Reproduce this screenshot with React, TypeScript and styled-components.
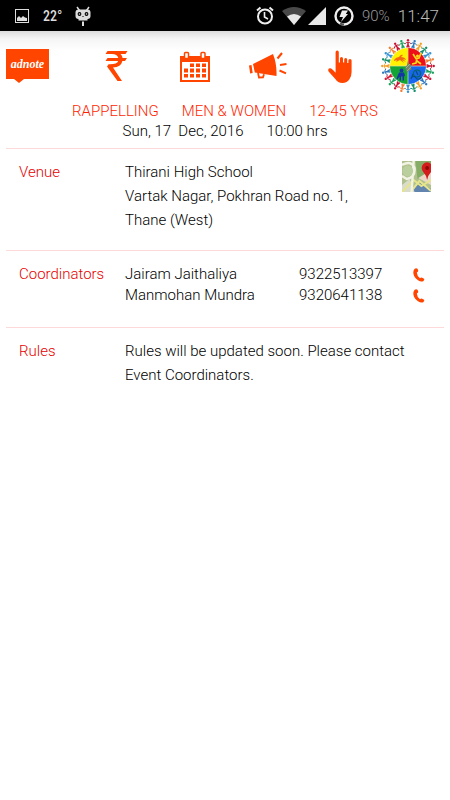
import React from "react";
import styled, { createGlobalStyle } from "styled-components";

const ORANGE = "#ff4500";

const GlobalStyle = createGlobalStyle`
  *, *::before, *::after { box-sizing: border-box; }
  body {
    margin: 0;
    background: #fff;
    color: #000;
    font-family: Roboto, "Open Sans", sans-serif;
    font-size: 15px;
    font-weight: 300;
  }
`;

const Page = styled.div`
  min-height: 100vh;
`;

const StatusBar = styled.div`
  display: flex;
  align-items: center;
  justify-content: space-between;
  height: 31px;
  padding: 0 11px 0 14px;
  background: #000;
  color: #ddd;
`;

const StatusLeft = styled.div`
  display: flex;
  align-items: center;
  gap: 13px;
`;

const StatusRight = styled.div`
  display: flex;
  align-items: center;
  gap: 8px;
`;

const Reception = styled.div`
  display: flex;
  gap: 2px;
`;

const Temperature = styled.span`
  font-family: "Liberation Sans Narrow", "Roboto Condensed", Roboto, sans-serif;
  font-size: 14px;
  font-weight: 500;
`;

const Battery = styled.span`
  font-size: 15px;
  color: #999;
`;

const Clock = styled.span`
  font-size: 17px;
  color: #bbb;
`;

const Toolbar = styled.nav`
  display: grid;
  grid-template-columns: 68fr 96fr 62fr 84fr 60fr 76fr;
  align-items: center;
  height: 70px;
  padding-right: 4px;
  background: linear-gradient(#dcdcdc, #f5f5f5 8px, #fff 20px);
`;

const ToolButton = styled.button<{ $align?: string }>`
  display: flex;
  align-items: center;
  justify-content: ${(p) => p.$align ?? "center"};
  height: 60px;
  padding: 0 6px;
  border: 0;
  background: none;
  cursor: pointer;
`;

const NoteBadge = styled.span`
  position: relative;
  display: flex;
  align-items: center;
  justify-content: center;
  width: 43px;
  height: 30px;
  margin-bottom: 4px;
  background: ${ORANGE};
  color: #fff;
  font-family: "Liberation Serif", serif;
  font-size: 12px;
  font-style: italic;
  font-weight: 700;

  &::after {
    content: "";
    position: absolute;
    top: 100%;
    left: 8px;
    border: 5px solid transparent;
    border-top: 4px solid ${ORANGE};
    border-bottom: 0;
  }
`;

const EventHeader = styled.header`
  display: flex;
  flex-direction: column;
  align-items: center;
  padding-bottom: 7px;
`;

const EventLine = styled.div<{ $accent?: boolean }>`
  display: flex;
  gap: 23px;
  line-height: 20px;
  white-space: pre;
  color: ${(p) => (p.$accent ? "#ff1e00" : "#000")};
`;

const Section = styled.section`
  display: grid;
  grid-template-columns: 106px 1fr;
  margin: 0 6px;
  padding: 11px 13px 18px;
  border-top: 1px solid #fdd9d9;
`;

const SectionLabel = styled.h2`
  margin: 0;
  color: #e60000;
  font-size: 15px;
  font-weight: 300;
  line-height: 24px;
`;

const VenueBody = styled.div`
  display: flex;
  align-items: flex-start;
  justify-content: space-between;
`;

const Text = styled.p`
  margin: 0;
  line-height: 24px;
`;

const MapLink = styled.a`
  display: block;
  height: 30px;
  margin-top: 1px;
`;

const ContactTable = styled.table`
  width: 100%;
  margin: 2px 0 3px;
  border-collapse: collapse;
  line-height: 21px;

  td { padding: 0; }
`;

const NumberCell = styled.td`
  width: 108px;
`;

const CallCell = styled.td`
  width: 24px;
`;

const CallLink = styled.a`
  display: flex;
  justify-content: center;
`;

const PictureIcon = () => (
  <svg width="16" height="16" viewBox="0 0 16 16" aria-hidden="true">
    <rect x="1.5" y="1.5" width="13" height="13" fill="none" stroke="#ddd" />
    <path d="M3 13v-3l2-2 2 2 2-2 2 1.5 2 .5v3z" fill="#ddd" />
  </svg>
);

const CidIcon = () => (
  <svg width="16" height="20" viewBox="0 0 16 20" aria-hidden="true">
    <path d="M2 1l2.500 3.500M14 1l-2.500 3.500" stroke="#ddd" strokeWidth="1.500" />
    <rect x="0.500" y="3.500" width="15" height="9.500" rx="3" fill="#ddd" />
    <path d="M3.500 12h9v2.500h-9zM7 15.500h2V20H7z" fill="#ddd" />
    <circle cx="4.500" cy="8" r="1.900" />
    <circle cx="11.500" cy="8" r="1.900" />
    <circle cx="4.500" cy="8" r="0.800" fill="#ddd" />
    <circle cx="11.500" cy="8" r="0.800" fill="#ddd" />
    <path d="M7 11l1-1 1 1z" />
  </svg>
);

const AlarmIcon = () => (
  <svg width="18" height="19" viewBox="0 0 18 19" fill="none" stroke="#eee" aria-hidden="true">
    <circle cx="9" cy="10.500" r="7" strokeWidth="2" />
    <path d="M8.500 6v5l3.500 2" strokeWidth="1.600" />
    <path d="M1 4.500L4.500 1.500M17 4.500L13.500 1.500" strokeWidth="2" />
  </svg>
);

const WifiIcon = () => (
  <svg width="24" height="18" viewBox="0 0 24 18" aria-hidden="true">
    <path d="M12 18L0 4Q12-4 24 4z" fill="#494949" />
    <path d="M12 18L5 9.500Q12 4.500 19 9.500z" fill="#e8e8e8" />
  </svg>
);

const SignalIcon = () => (
  <svg width="18" height="18" viewBox="0 0 18 18" aria-hidden="true">
    <path d="M0 18L18 0v18z" fill="#e8e8e8" />
  </svg>
);

const ChargeIcon = () => (
  <svg width="20" height="20" viewBox="0 0 20 20" aria-hidden="true">
    <circle cx="10" cy="10" r="8.500" fill="none" stroke="#eee" strokeWidth="2.400" />
    <path d="M8 4.500h6L11.800 8H14l-7 8 2-5H5.500z" fill="#eee" />
    <path d="M6 17.500q2 1 4 1" stroke="#555" strokeWidth="2.200" fill="none" />
  </svg>
);

const RupeeIcon = () => (
  <svg width="24" height="32" viewBox="0 0 24 32" aria-hidden="true">
    <path
      d="M3.500 1h20l-2 3h-5q1.700 1.500 2.100 4H23l-2 3h-2.600Q17 17.200 9 17.400L18 31h-4.500L3 16.500 4.600 14.200Q13 14.500 14.200 11H1.500L3.500 8h10.800Q13.300 4.200 8 4H1.500z"
      fill={ORANGE}
    />
  </svg>
);

const CalendarIcon = () => (
  <svg width="30" height="31" viewBox="0 0 30 31" aria-hidden="true">
    <path d="M0 5h30v26H0z" fill={ORANGE} />
    <path d="M2 11h26v18H2z" fill="#fff" />
    <rect x="4.500" y="1.500" width="4" height="6" rx="1" fill="#fff" stroke={ORANGE} strokeWidth="1.500" />
    <rect x="21" y="1.500" width="4" height="6" rx="1" fill="#fff" stroke={ORANGE} strokeWidth="1.500" />
    <path
      d="M10 12.500h4v3.500h-4zM16 12.500h4v3.500h-4zM22 12.500h4v3.500h-4zM4 17.500h4v4H4zM10 17.500h4v4h-4zM16 17.500h4v4h-4zM22 17.500h4v4h-4zM4 23h4v3.500H4zM10 23h4v3.500h-4zM16 23h4v3.500h-4zM22 23h4v3.500h-4z"
      fill={ORANGE}
    />
  </svg>
);

const MegaphoneIcon = () => (
  <svg width="38" height="28" viewBox="0 0 38 28" aria-hidden="true">
    <path d="M0 13.500l2.500-.5 1.200 8-2.500.4zM4 12L24 2q4 10 3.500 22L5.800 20.600z" fill={ORANGE} />
    <path d="M9 21l1 4.500 4-.2 1-3" fill="none" stroke={ORANGE} strokeWidth="1.800" />
    <path d="M28.500 6.500L33 1M31 13l6.500-1M30.500 18.500l6.500 2.800" stroke={ORANGE} strokeWidth="2" />
  </svg>
);

const HandIcon = () => (
  <svg width="25" height="33" viewBox="0 0 25 33" aria-hidden="true">
    <path
      d="M7.600 2.200a1.600 1.600 0 0 1 3.200 0v10.300h1.200V8.500a1.500 1.500 0 0 1 3 0v4h1.200V9.500a1.500 1.500 0 0 1 3 0V13h1.200v-2.500a1.500 1.500 0 0 1 3.200 0V22q0 3.500-2 7-2.400 4-7.300 4-4.500 0-7-4L.6 21.500Q-.6 18.800 1.800 18.300q1.800-.2 3.200 1.700l2.600 2.800z"
      fill={ORANGE}
    />
  </svg>
);

const PEOPLE_COLORS = ["#d01838", "#2f78bd", "#f2a02c", "#16906a", "#3593d1", "#f08038", "#c8102e", "#19a05a"];
const PEOPLE = Array.from({ length: 24 }, (_, i) => ({
  angle: i * 15,
  color: PEOPLE_COLORS[i % PEOPLE_COLORS.length],
}));

const FestivalLogo = () => (
  <svg width="54" height="54" viewBox="-27 -27 54 54" aria-hidden="true">
    {PEOPLE.map(({ angle, color }) => (
      <g key={angle} transform={`rotate(${angle})`} stroke={color} fill="none">
        <circle cx="0" cy="-25.700" r="1.200" fill={color} stroke="none" />
        <path d="M-3-22.200L-1.200-23.700H1.200L3-22.200" strokeWidth="0.900" />
        <path d="M0-24V-21.500L-1.200-18.500M0-21.500L1.200-18.500" strokeWidth="1.500" />
      </g>
    ))}
    <path d="M0 0V-18A18 18 0 0 0-18 0z" fill="#fff200" />
    <path d="M0 0V-18A18 18 0 0 1 18 0z" fill="#ed1018" />
    <path d="M0 0V18A18 18 0 0 1-18 0z" fill="#12a535" />
    <path d="M0 0V18A18 18 0 0 0 18 0z" fill="#1767ef" />
    <path d="M0-18V18M-18 0H18" stroke="#e9dfa8" strokeWidth="0.700" />
    <path
      d="M-14-6q2-3 5-3 2-3 4-2l-2 2q4 0 5 3l-3-1 3 3-4-2 2 3-4-3-2 1-2 1 1-2-3 1z"
      fill="#f36a12"
    />
    <circle cx="9.500" cy="-10" r="1.500" fill="#ffd91a" />
    <path
      d="M5-12l3 4.500 3-.5 2-5M9-7.500L8-3 4-2M9-5l4 3"
      fill="none"
      stroke="#ffd91a"
      strokeWidth="1.700"
    />
    <circle cx="-6.500" cy="4.500" r="1.900" fill="#1636a5" />
    <path d="M-9 6.500h5l1 3-1 1v4h-1.500v-4h-1.500v4H-8.500v-4l-2 3-1-1z" fill="#1636a5" />
    <circle cx="9" cy="7.500" r="3.500" fill="none" stroke="#08655f" strokeWidth="1.200" />
    <path d="M3 12q3-3 5 0t6-1M8 5l2 4M5 8l-2 5" fill="none" stroke="#084b79" strokeWidth="1.100" />
    <path d="M-3 2l2-3 1-5 1 4 3 1-2 2 2 2-3 2-2 2-1-3z" fill="#71856f" />
    <path d="M-2 2L2-2M-1 5L3 1" stroke="#b8c09f" strokeWidth="0.700" />
  </svg>
);

const MapIcon = () => (
  <svg width="29" height="31" viewBox="0 0 30 31" preserveAspectRatio="none" aria-hidden="true">
    <rect width="30" height="31" fill="#b1c18d" />
    <path d="M14 0h16v10L16 18z" fill="#86ad67" />
    <path d="M17 17l13-8v15z" fill="#ead9c8" />
    <path d="M8 31l9-10 13 7v3z" fill="#6285b0" />
    <path d="M0 24l8-6 5 13H0z" fill="#d9dccb" />
    <path d="M0 31L12 19l8 6 10-6M9 31l9-11 12 10" fill="none" stroke="#e6e58c" strokeWidth="2" />
    <path d="M12 0L10 31M0 4q10-5 13 3 1 9-8 11L0 15" fill="none" stroke="#f2f3e5" strokeWidth="2.500" />
    <circle cx="6" cy="10" r="5.500" fill="#b9cf9d" />
    <path d="M26 19q-1-5-4-8a5 5 0 0 1 8-8v8q-3 3-4 8z" fill="#d41c1c" />
    <circle cx="26" cy="7" r="2" fill="#8c0909" />
  </svg>
);

const PhoneIcon = () => (
  <svg width="12" height="14" viewBox="0 0 12 14" aria-hidden="true">
    <path
      d="M1.500 1Q3-.4 4.500.7L5.300 2.800Q5.200 3.800 3.800 4.400 4 7.800 7 10.200 8.300 9.200 9.200 9.800L11 10.800Q11.800 12 10.200 13.200 8 14.300 5 12.300 1 9.500.4 5.500 0 2.500 1.500 1z"
      fill={ORANGE}
    />
  </svg>
);

const COORDINATORS = [
  { name: "Jairam Jaithaliya", phone: "9322513397" },
  { name: "Manmohan Mundra", phone: "9320641138" },
];

export default function App() {
  return (
    <Page>
      <GlobalStyle />
      <StatusBar>
        <StatusLeft>
          <PictureIcon />
          <Temperature>22°</Temperature>
          <CidIcon />
        </StatusLeft>
        <StatusRight>
          <AlarmIcon />
          <Reception>
            <WifiIcon />
            <SignalIcon />
          </Reception>
          <ChargeIcon />
          <Battery>90%</Battery>
          <Clock>11:47</Clock>
        </StatusRight>
      </StatusBar>
      <Toolbar aria-label="Main">
        <ToolButton $align="flex-start"><NoteBadge>adnote</NoteBadge></ToolButton>
        <ToolButton aria-label="Fees"><RupeeIcon /></ToolButton>
        <ToolButton aria-label="Calendar"><CalendarIcon /></ToolButton>
        <ToolButton aria-label="Announcements"><MegaphoneIcon /></ToolButton>
        <ToolButton aria-label="Select"><HandIcon /></ToolButton>
        <ToolButton aria-label="Festival"><FestivalLogo /></ToolButton>
      </Toolbar>
      <main>
        <EventHeader>
          <EventLine $accent>
            <span>RAPPELLING</span>
            <span>MEN &amp; WOMEN</span>
            <span>12-45 YRS</span>
          </EventLine>
          <EventLine>
            <span>{"Sun, 17  Dec, 2016"}</span>
            <span>10:00 hrs</span>
          </EventLine>
        </EventHeader>
        <Section>
          <SectionLabel>Venue</SectionLabel>
          <VenueBody>
            <Text>
              Thirani High School
              <br />
              Vartak Nagar, Pokhran Road no. 1,
              <br />
              Thane (West)
            </Text>
            <MapLink href="#map" aria-label="Open map"><MapIcon /></MapLink>
          </VenueBody>
        </Section>
        <Section>
          <SectionLabel>Coordinators</SectionLabel>
          <ContactTable>
            <tbody>
              {COORDINATORS.map(({ name, phone }) => (
                <tr key={phone}>
                  <td>{name}</td>
                  <NumberCell>{phone}</NumberCell>
                  <CallCell>
                    <CallLink href={`tel:${phone}`} aria-label={`Call ${name}`}><PhoneIcon /></CallLink>
                  </CallCell>
                </tr>
              ))}
            </tbody>
          </ContactTable>
        </Section>
        <Section>
          <SectionLabel>Rules</SectionLabel>
          <Text>Rules will be updated soon. Please contact Event Coordinators.</Text>
        </Section>
      </main>
    </Page>
  );
}
